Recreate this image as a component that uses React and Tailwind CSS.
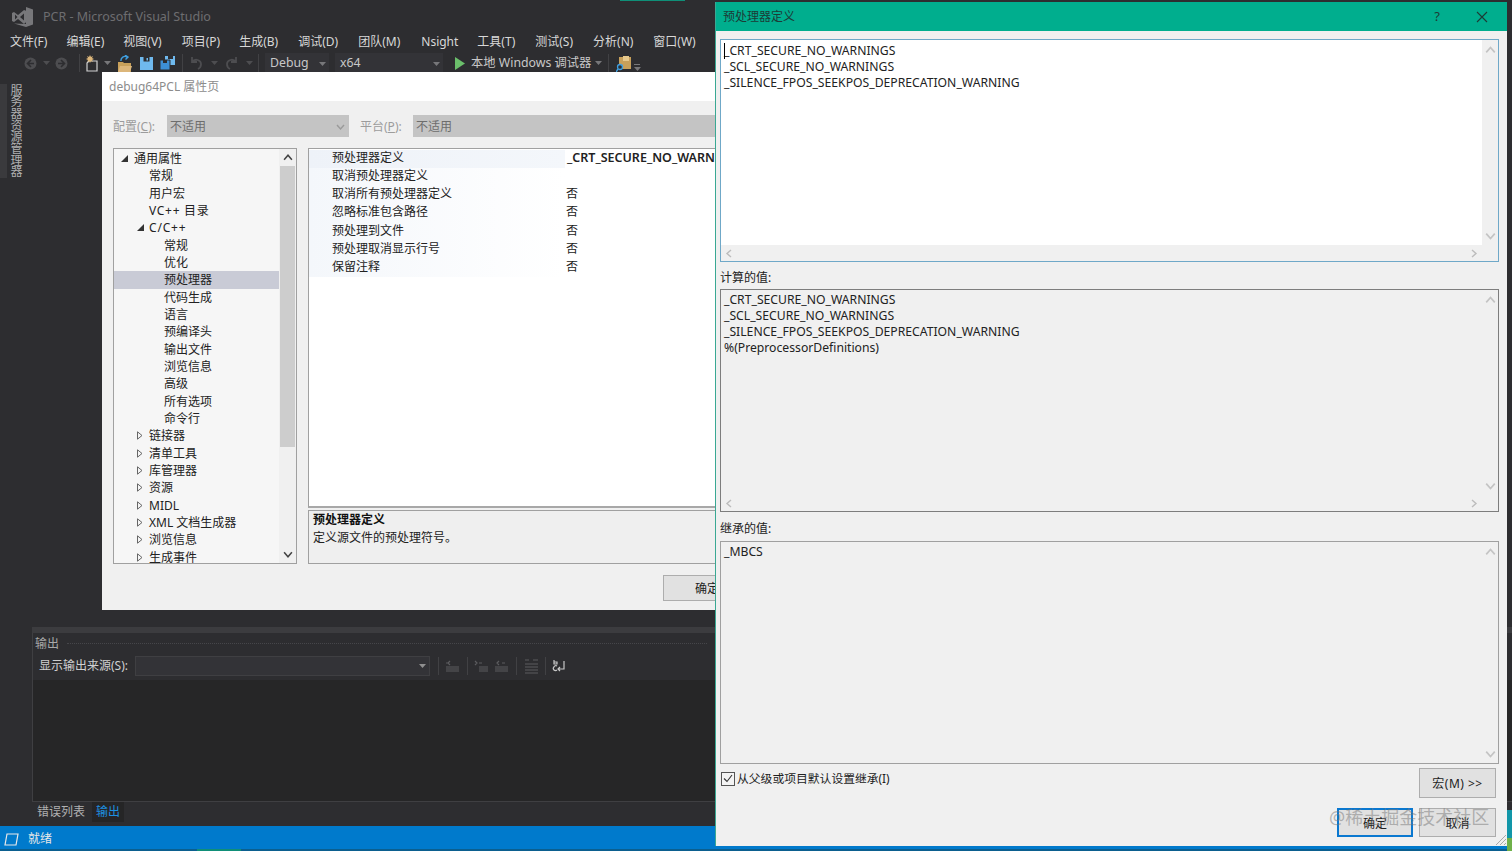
const Caret = ({ c = "#77777a", cls = "" }) => (
  <svg width="7" height="4" viewBox="0 0 7 4" className={cls}><path d="M0 0h7L3.5 4z" fill={c} /></svg>
);

const Chevron = ({ dir = "up", c = "#b4b4b4", size = 9, cls = "" }) => {
  const d = { up: "M1 6l3.5-4L8 6", down: "M1 3l3.5 4L8 3", left: "M6 1L2 4.5 6 8", right: "M3 1l4 3.5L3 8" }[dir];
  return (
    <svg width={size} height={size} viewBox="0 0 9 9" className={cls}>
      <path d={d} fill="none" stroke={c} strokeWidth="1.4" />
    </svg>
  );
};

const VsLogo = () => (
  <svg width="21" height="20" viewBox="0 0 21 20">
    <path d="M14 0l7 2.500v15L14 20l-12-3.500L14 17z" fill="#77777a" />
    <path d="M0 6l2-1 4 3 6-5 2 .8v11.400L12 17l-6-5-4 3-2-1z" fill="#77777a" />
    <path d="M3 7.500v5l2.500-2.500zM12 6.500l-4 3.500 4 3.500z" fill="#2d2d30" />
  </svg>
);

const CircleArrow = ({ flip }) => (
  <svg width="13" height="13" viewBox="0 0 13 13" className={flip ? "-scale-x-100" : ""}>
    <circle cx="6.500" cy="6.500" r="6" fill="#4d4d50" />
    <path d="M7 3L3.500 6.500 7 10M4 6.500h6" fill="none" stroke="#2d2d30" strokeWidth="1.600" />
  </svg>
);

const NewProject = () => (
  <svg width="15" height="17" viewBox="0 0 15 17">
    <path d="M4 6h8v10H2V8z" fill="none" stroke="#d0d0d0" strokeWidth="1.200" />
    <path d="M5 0l1 2 2-1-1 2 2 1-2 1 1 2-2-1-1 2-1-2-2 1 1-2-2-1 2-1-1-2 2 1z" fill="#dcb67a" />
  </svg>
);

const OpenFolder = () => (
  <svg width="15" height="17" viewBox="0 0 15 17">
    <path d="M1 7h5l1 1h7v9H1z" fill="#c8a05a" />
    <path d="M1 17l2-6h12l-2 6z" fill="#dcb67a" />
    <path d="M4 6a4 4 0 0 1 6-4M8 0l3 2-2.500 2.500" fill="none" stroke="#3f9fe0" strokeWidth="1.400" />
  </svg>
);

const Save = () => (
  <svg width="13" height="13" viewBox="0 0 13 13">
    <path d="M0 0h13v13H0z" fill="#6fb9ee" />
    <path d="M3.500 0h6v4.500h-6z" fill="#2d2d30" />
    <path d="M6.500 1h1.500v2.500H6.500z" fill="#6fb9ee" />
  </svg>
);

const SaveAll = () => (
  <svg width="15" height="14" viewBox="0 0 15 14">
    <path d="M5 0h10v9H5z" fill="#6fb9ee" />
    <path d="M8 0h5v3H8z" fill="#2d2d30" />
    <path d="M0 4h10v10H0z" fill="#3d8fd6" stroke="#2d2d30" />
    <path d="M3 4h4v3H3z" fill="#2d2d30" />
  </svg>
);

const Undo = ({ flip }) => (
  <svg width="13" height="14" viewBox="0 0 13 14" className={flip ? "-scale-x-100" : ""}>
    <path d="M2 1v5h5M2 6c3-4 9-2 9 2 0 2-1 4-3 5" fill="none" stroke="#4d4d50" strokeWidth="1.800" />
  </svg>
);

const Play = () => (
  <svg width="10" height="13" viewBox="0 0 10 13"><path d="M0 0l10 6.500L0 13z" fill="#6bbf6b" /></svg>
);

const FindIcon = () => (
  <svg width="15" height="17" viewBox="0 0 15 17">
    <path d="M3 2h12v12H3z" fill="#c8a05a" />
    <path d="M7 1h6v5H7z" fill="#e6c88c" />
    <circle cx="4" cy="12" r="2.500" fill="#2d2d30" stroke="#3f9fe0" strokeWidth="1.300" />
    <path d="M2 14l-2 3" stroke="#3f9fe0" strokeWidth="1.500" />
  </svg>
);

const ToolSep = ({ cls }) => <div className={`w-px h-[18px] bg-[#414144] ${cls}`} />;

const OutIcon = ({ kind }) => {
  const col = kind === "wrap" ? "#c8c8c8" : "#5c5c5f";
  const paths = {
    a: "M1 5h2M5 3l-2 2 2 2M1 9h13M1 11h13M1 13h13",
    b: "M1 3l2 2-2 2M5 9h9M5 11h9M5 13h9M5 5h3",
    c: "M5 3l-2 2 2 2M1 9h13M1 11h13M1 13h13M8 5h3",
    d: "M1 2h4M9 2h5M1 6h13M1 9h13M1 12h13M1 15h13",
    wrap: "M2 2v4h3V4H2M2 9a2 2 0 0 1 3-1M2 9a2 2 0 0 0 3 3M12 3v8H6M8 9l-2 2 2 2",
  };
  return (
    <svg width="15" height="16" viewBox="0 0 15 16">
      <path d={paths[kind]} fill="none" stroke={col} strokeWidth="1.200" />
    </svg>
  );
};

const menus = [
  ["文件(F)", "ml-[10px]"],
  ["编辑(E)", "ml-[19px]"],
  ["视图(V)", "ml-[19px]"],
  ["项目(P)", "ml-[20px]"],
  ["生成(B)", "ml-[19px]"],
  ["调试(D)", "ml-[20px]"],
  ["团队(M)", "ml-[20px]"],
  ["Nsight", "ml-[21px]"],
  ["工具(T)", "ml-[19px]"],
  ["测试(S)", "ml-[20px]"],
  ["分析(N)", "ml-[20px]"],
  ["窗口(W)", "ml-[20px]"],
];

const tree = [
  ["通用属性", 0, "open"],
  ["常规", 1],
  ["用户宏", 1],
  ["VC++ 目录", 1, "", "tracking-[0.7px]"],
  ["C/C++", 1, "open", "tracking-[0.8px]"],
  ["常规", 2],
  ["优化", 2],
  ["预处理器", 2, "sel"],
  ["代码生成", 2],
  ["语言", 2],
  ["预编译头", 2],
  ["输出文件", 2],
  ["浏览信息", 2],
  ["高级", 2],
  ["所有选项", 2],
  ["命令行", 2],
  ["链接器", 1, "closed"],
  ["清单工具", 1, "closed"],
  ["库管理器", 1, "closed"],
  ["资源", 1, "closed"],
  ["MIDL", 1, "closed"],
  ["XML 文档生成器", 1, "closed"],
  ["浏览信息", 1, "closed"],
  ["生成事件", 1, "closed"],
];

const TreeRow = ({ label, level, state, cls = "" }) => {
  const pad = ["pl-[20px]", "pl-[35px]", "pl-[50px]"][level];
  const arrowPos = level === 0 ? "left-[7px]" : "left-[23px]";
  return (
    <div className={`relative h-[17.33px] leading-[17.33px] whitespace-nowrap ${pad} ${cls} ${state === "sel" ? "bg-[#c9cbd6]" : ""}`}>
      {state === "open" && (
        <svg width="7" height="7" viewBox="0 0 7 7" className={`absolute top-[5px] ${arrowPos}`}><path d="M7 0v7H0z" fill="#333" /></svg>
      )}
      {state === "closed" && (
        <svg width="6" height="9" viewBox="0 0 6 9" className={`absolute top-[4px] ${arrowPos}`}><path d="M.5.8L5 4.500.5 8.200z" fill="none" stroke="#666" /></svg>
      )}
      {label}
    </div>
  );
};

const props = [
  ["预处理器定义", "_CRT_SECURE_NO_WARNINGS;_SCL", true],
  ["取消预处理器定义", ""],
  ["取消所有预处理器定义", "否"],
  ["忽略标准包含路径", "否"],
  ["预处理到文件", "否"],
  ["预处理取消显示行号", "否"],
  ["保留注释", "否"],
];

const TextBox = ({ lines, border, bg, hScroll = true, cls = "", caret, top = "pt-[2px]" }) => (
  <div className={`flex flex-col border ${border} ${bg} ${cls}`}>
    <div className="flex-1 min-h-0 flex">
      <div className={`flex-1 ${top} pl-[3px] leading-[16px] text-[12.200px] text-[#222]`}>
        {lines.map((l, i) => (
          <div key={i} className="relative">
            {caret && i === 0 && <span className="absolute left-0 top-0 w-px h-[16px] bg-black" />}
            {l}
          </div>
        ))}
      </div>
      <div className="w-[16px] bg-[#f0f0f0] flex flex-col items-center justify-between pt-[5px] pb-[4px]">
        <Chevron dir="up" size={11} c="#c4c4c4" />
        <Chevron dir="down" size={11} c="#c4c4c4" />
      </div>
    </div>
    {hScroll && (
      <div className="h-[16px] bg-[#f0f0f0] flex items-center justify-between pl-[4px] pr-[20px]">
        <Chevron dir="left" size={9} c="#bcbcbc" />
        <Chevron dir="right" size={9} c="#bcbcbc" />
      </div>
    )}
  </div>
);

const Btn = ({ children, cls = "" }) => (
  <div className={`flex items-center justify-center pt-[2px] bg-[#e1e1e1] border border-[#adadad] text-[12px] text-[#222] ${cls}`}>{children}</div>
);

export default function App() {
  return (
    <div className="relative w-[1512px] h-[851px] overflow-hidden bg-[#2d2d30] flex flex-col text-[12px] font-['Noto_Sans','Noto_Sans_CJK_SC',sans-serif]">
      {/* top accent */}
      <div className="absolute top-0 left-[620px] w-[65px] h-[1px] bg-[#0f8f78]" />

      {/* Title bar */}
      <div className="h-[30px] flex items-center shrink-0 pt-[3px]">
        <div className="ml-[12px]"><VsLogo /></div>
        <span className="ml-[10px] pt-[2px] text-[#6d6d70] text-[12.500px]">PCR - Microsoft Visual Studio</span>
      </div>

      {/* Menu */}
      <div className="h-[22px] pt-[2px] flex items-center shrink-0 text-[#d8d8d8] whitespace-nowrap">
        {menus.map(([m, c]) => (
          <span key={m} className={c}>{m}</span>
        ))}
      </div>

      {/* Toolbar */}
      <div className="h-[22px] flex items-center shrink-0 text-[#c8c8c8] whitespace-nowrap text-[12.300px]">
        <div className="ml-[24px]"><CircleArrow /></div>
        <Caret cls="ml-[6px]" c="#4d4d50" />
        <div className="ml-[5px]"><CircleArrow flip /></div>
        <ToolSep cls="ml-[11px]" />
        <div className="ml-[5px]"><NewProject /></div>
        <Caret cls="ml-[4px]" />
        <div className="ml-[6px]"><OpenFolder /></div>
        <div className="ml-[8px]"><Save /></div>
        <div className="ml-[7px]"><SaveAll /></div>
        <ToolSep cls="ml-[7px]" />
        <div className="ml-[7px]"><Undo /></div>
        <Caret cls="ml-[8px]" c="#4d4d50" />
        <div className="ml-[7px]"><Undo flip /></div>
        <Caret cls="ml-[8px]" c="#4d4d50" />
        <ToolSep cls="ml-[5px]" />
        <div className="ml-[6px] w-[64px] h-[20px] pt-[1px] bg-[#333337] flex items-center justify-between pl-[5px] pr-[3px]">
          <span>Debug</span><Caret />
        </div>
        <div className="ml-[6px] w-[108px] h-[20px] pt-[1px] bg-[#333337] flex items-center justify-between pl-[5px] pr-[3px]">
          <span>x64</span><Caret />
        </div>
        <div className="ml-[12px]"><Play /></div>
        <span className="ml-[6px] pt-[1px]">本地 Windows 调试器</span>
        <Caret cls="ml-[4px]" />
        <ToolSep cls="ml-[6px]" />
        <div className="ml-[7px]"><FindIcon /></div>
        <div className="ml-[3px] mt-[9px] w-[6px] flex flex-col gap-[2px]">
          <div className="h-px bg-[#77777a]" />
          <Caret />
        </div>
      </div>

      {/* Body */}
      <div className="flex-1 min-h-0 flex">
        <div className="w-[32px] shrink-0 pt-[10px]">
          <div className="w-[24px] h-[94px] flex">
            <div className="w-[7px] bg-[#3a3a3d]" />
            <div className="[writing-mode:vertical-rl] text-[12px] leading-[17px] text-[#b0b0b0] tracking-[-0.3px] whitespace-nowrap">服务器资源管理器</div>
          </div>
        </div>
        <div className="flex-1 min-w-0 flex flex-col pt-[553px]">
          <div className="h-[6px] bg-[#3c3c3f]" />
          <div className="flex-1 min-h-0 border-l border-[#3f3f42] flex flex-col">
            <div className="h-[21px] flex items-center pl-[2px] text-[#a8a8a8]">
              <span>输出</span>
              <div className="ml-[8px] w-[640px] border-t border-dotted border-[#46464a]" />
            </div>
            <div className="h-[26px] pb-[2px] flex items-center text-[#d0d0d0] bg-[#2d2d30] whitespace-nowrap">
              <span className="ml-[6px] w-[90px]">显示输出来源(S):</span>
              <div className="ml-[6px] w-[295px] h-[20px] bg-[#333337] border border-[#3f3f42] flex items-center justify-end pr-[3px]">
                <Caret c="#909090" />
              </div>
              <ToolSep cls="ml-[8px]" />
              <div className="ml-[6px]"><OutIcon kind="a" /></div>
              <ToolSep cls="ml-[7px]" />
              <div className="ml-[6px]"><OutIcon kind="b" /></div>
              <div className="ml-[5px]"><OutIcon kind="c" /></div>
              <ToolSep cls="ml-[7px]" />
              <div className="ml-[7px]"><OutIcon kind="d" /></div>
              <ToolSep cls="ml-[6px]" />
              <div className="ml-[6px]"><OutIcon kind="wrap" /></div>
            </div>
            <div className="flex-1 bg-[#262627]" />
          </div>
          <div className="h-[25px] border-t border-[#3f3f42] flex items-start">
            <span className="ml-[5px] mt-[1px] text-[#b0b0b0]">错误列表</span>
            <span className="ml-[7px] px-[4px] h-[20px] leading-[20px] bg-[#252526] text-[#1d8fe0]">输出</span>
          </div>
        </div>
      </div>

      {/* Status bar */}
      <div className="h-[23px] shrink-0 bg-[#007acc] flex items-center pt-[3px] text-[#e8e8e8]">
        <svg width="15" height="13" viewBox="0 0 15 13" className="ml-[4px]"><path d="M3 1h11l-2 11H1z" fill="none" stroke="#e8e8e8" strokeWidth="1.200" /></svg>
        <span className="ml-[9px]">就绪</span>
      </div>
      <div className="h-[2px] shrink-0 bg-[#0b5f8f] relative">
        <div className="absolute left-[197px] bottom-0 w-[44px] h-[2px] bg-[#0f8f78]" />
      </div>

      {/* Property pages window */}
      <div className="absolute left-[102px] top-[72px] w-[614px] h-[538px] bg-[#f0f0f0] flex flex-col text-[#222]">
        <div className="h-[29px] shrink-0 bg-white flex items-center pl-[7px] text-[#8c8c8c]">debug64PCL 属性页</div>
        <div className="flex items-center mt-[14px] h-[22px] shrink-0 text-[#9c9c9c] whitespace-nowrap">
          <span className="ml-[11px] w-[54px] pt-[1px]">配置(<u>C</u>):</span>
          <div className="w-[182px] h-[22px] pt-[1px] bg-[#c4c4c4] flex items-center justify-between pl-[3px] pr-[4px] text-[#6d6d6d]">
            <span>不适用</span><Chevron dir="down" size={9} c="#9a9a9a" />
          </div>
          <span className="ml-[11px] w-[53px] pt-[1px]">平台(<u>P</u>):</span>
          <div className="w-[303px] h-[22px] pt-[1px] bg-[#c4c4c4] flex items-center pl-[3px] text-[#6d6d6d]">
            <span>不适用</span>
          </div>
        </div>
        <div className="flex mt-[11px] pl-[11px] h-[416px] shrink-0">
          <div className="w-[184px] border border-[#a0a0a0] bg-[#f6f6f6] flex overflow-hidden">
            <div className="flex-1 overflow-hidden pt-[1px]">
              {tree.map((t, i) => (
                <TreeRow key={i} label={t[0]} level={t[1]} state={t[2]} cls={t[3]} />
              ))}
            </div>
            <div className="w-[17px] bg-[#f0f0f0] flex flex-col items-center justify-between py-[4px] relative">
              <Chevron dir="up" size={10} c="#444" />
              <div className="absolute left-[1px] right-[1px] top-[17px] h-[281px] bg-[#cdcdcd]" />
              <Chevron dir="down" size={10} c="#444" />
            </div>
          </div>
          <div className="ml-[11px] flex-1 min-w-0 flex flex-col">
            <div className="h-[360px] shrink-0 bg-white border-t border-l border-[#a0a0a0] border-b-2 border-b-[#a8a8a8] overflow-hidden pt-[1px]">
              {props.map(([k, v, b], i) => (
                <div key={k} className="flex h-[18.14px] leading-[16px] whitespace-nowrap">
                  <div className={`w-[256px] shrink-0 pl-[23px] bg-gradient-to-r ${i === 0 ? "from-[#eef2f8] to-[#f4f7fb]" : "from-[#f4f7fb] to-white"}`}>{k}</div>
                  <div className={b ? "pl-[2px] font-semibold text-[12.500px]" : "pl-[1px]"}>{v}</div>
                </div>
              ))}
            </div>
            <div className="flex-1 mt-[2px] bg-[#efefef] border-t border-l border-b border-[#a0a0a0] pl-[4px] pt-[1px] leading-[16px] whitespace-nowrap">
              <div className="font-semibold text-[#111]">预处理器定义</div>
              <div className="mt-[2px]">定义源文件的预处理符号。</div>
            </div>
          </div>
        </div>
        <div className="mt-[11px] pl-[561px] overflow-hidden">
          <Btn cls="w-[76px] h-[26px] !justify-start pl-[31px] whitespace-nowrap">确定</Btn>
        </div>
      </div>

      {/* Accent on the far right */}
      <div className="absolute left-[1507px] top-[810px] w-[5px] h-[28px] bg-[#1296a8]" />
      <div className="absolute left-[1507px] top-[838px] w-[5px] h-[13px] bg-[#6fb04a]" />

      {/* Preprocessor definitions window */}
      <div className="absolute left-[715px] top-[2px] w-[792px] h-[844px] bg-[#f0f0f0] border-l border-[#3aa893] flex flex-col text-[#222]">
        <div className="h-[29px] shrink-0 bg-[#00ae8e] flex items-center text-[#1d3b36] pl-[7px] pt-[1px]">
          <span className="flex-1">预处理器定义</span>
          <span className="mr-[36px] text-[13px]">?</span>
          <svg width="12" height="12" viewBox="0 0 12 12" className="mr-[19px]"><path d="M1 1l10 10M11 1L1 11" stroke="#1d3b36" strokeWidth="1.100" /></svg>
        </div>
        <div className="flex-1 min-h-0 flex flex-col pl-[4px] pr-[8px] pt-[8px] relative">
          <TextBox
            caret
            top="pt-[3px]"
            lines={["_CRT_SECURE_NO_WARNINGS", "_SCL_SECURE_NO_WARNINGS", "_SILENCE_FPOS_SEEKPOS_DEPRECATION_WARNING"]}
            border="border-[#6fa8c8]"
            bg="bg-white"
            cls="h-[223px] shrink-0"
          />
          <div className="mt-[5px] h-[22px] leading-[22px] shrink-0">计算的值:</div>
          <TextBox
            lines={["_CRT_SECURE_NO_WARNINGS", "_SCL_SECURE_NO_WARNINGS", "_SILENCE_FPOS_SEEKPOS_DEPRECATION_WARNING", "%(PreprocessorDefinitions)"]}
            border="border-[#7d7d7d]"
            bg="bg-[#f0f0f0]"
            cls="h-[223px] shrink-0"
          />
          <div className="mt-[5px] h-[24px] leading-[24px] shrink-0">继承的值:</div>
          <TextBox
            lines={["_MBCS"]}
            border="border-[#a0a0a0]"
            bg="bg-[#f0f0f0]"
            hScroll={false}
            cls="h-[223px] shrink-0"
          />
          <div className="flex items-start mt-[4px] pl-[1px]">
            <div className="mt-[4px] flex items-center whitespace-nowrap">
              <div className="w-[14px] h-[14px] -mt-[2px] border border-[#555] bg-[#f4f4f4] flex items-center justify-center">
                <svg width="10" height="9" viewBox="0 0 10 9"><path d="M1 4.500l3 3L9 1" fill="none" stroke="#333" strokeWidth="1.100" /></svg>
              </div>
              <span className="ml-[2px] -mt-[2px] text-[11.800px]">从父级或项目默认设置继承(I)</span>
            </div>
            <Btn cls="ml-auto mr-[3px] w-[77px] h-[30px] tracking-[0.5px]">宏(M) &gt;&gt;</Btn>
          </div>
          <div className="flex justify-end mt-[10px] mr-[3px] gap-[6px]">
            <Btn cls="w-[76px] h-[29px] !border-2 !border-[#0a78d0]">确定</Btn>
            <Btn cls="w-[77px] h-[29px]">取消</Btn>
          </div>
          <svg width="13" height="13" viewBox="0 0 13 13" className="absolute right-0 bottom-0">
            <path d="M12 2L2 12M12 6l-6 6M12 10l-2 2" stroke="#a8a8a8" />
          </svg>
        </div>
      </div>

      {/* Watermark */}
      <div className="absolute left-[1329px] top-[804px] text-[18px] leading-[26px] text-[#77777780] whitespace-nowrap">@稀土掘金技术社区</div>
    </div>
  );
}
